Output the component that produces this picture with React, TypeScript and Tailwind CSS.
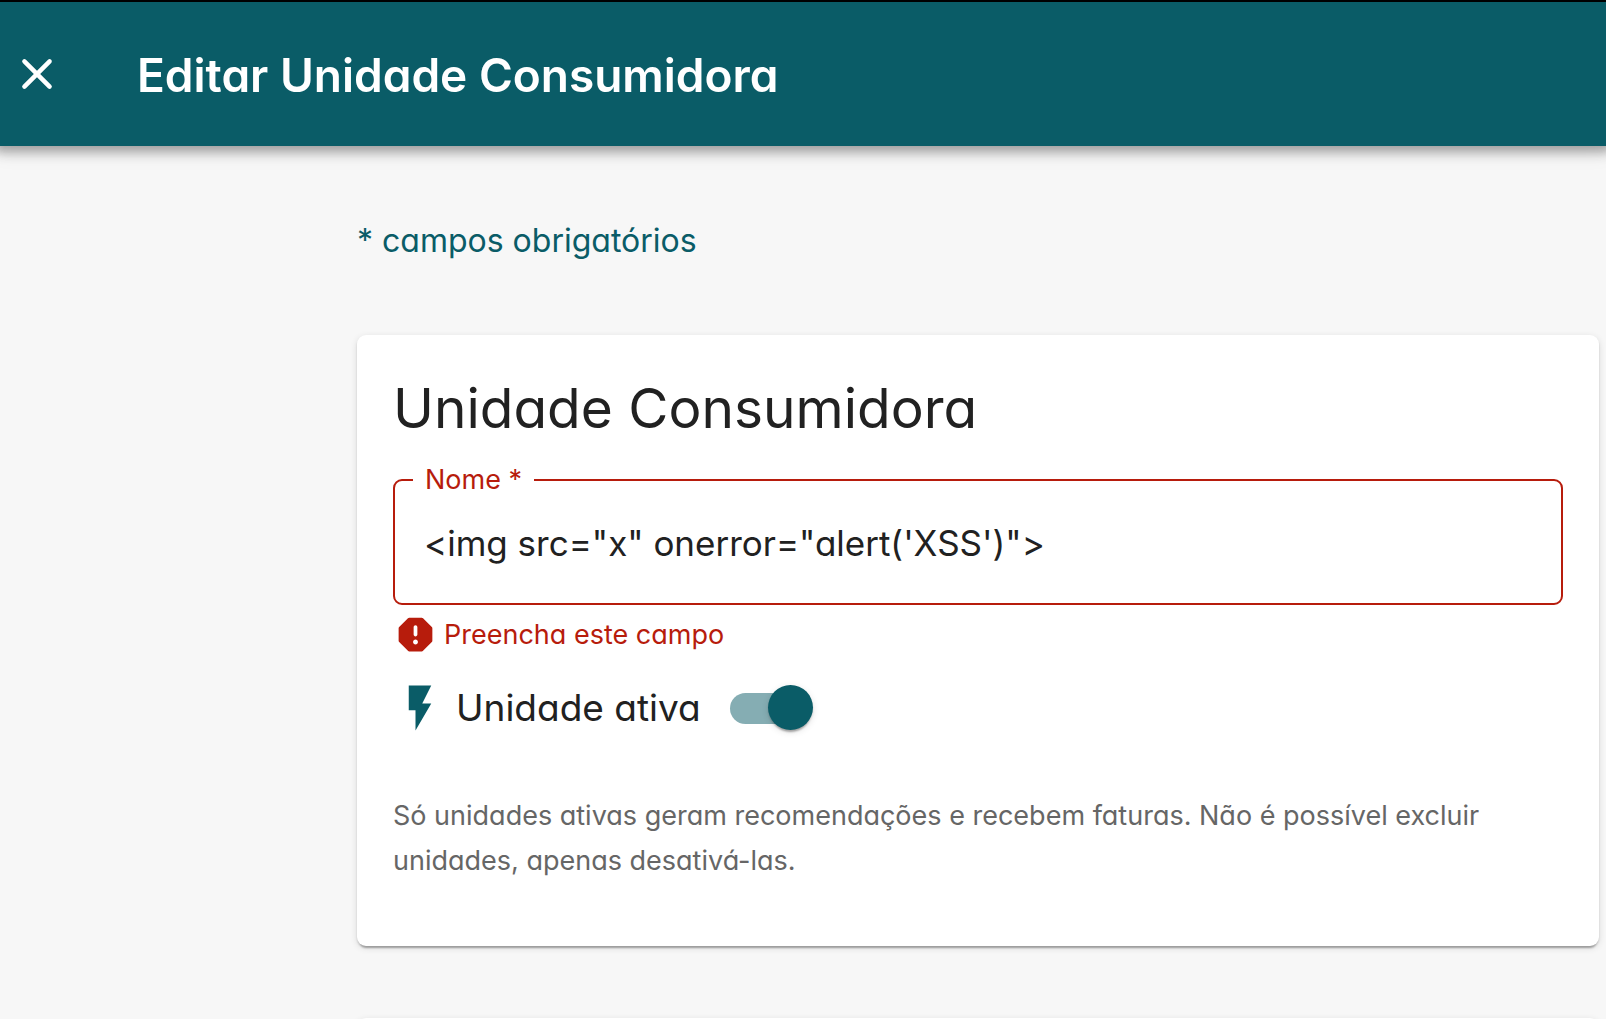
import { useState } from "react";

const shadowCard =
  "shadow-[0_5px_2px_-3px_rgba(0,0,0,0.2),0_2px_2px_0_rgba(0,0,0,0.14),0_2px_7px_0_rgba(0,0,0,0.12)]";

function CloseIcon() {
  return (
    <svg viewBox="0 0 24 24" className="size-[54px]" fill="currentColor" aria-hidden="true">
      <path d="M18.3 5.71a.996.996 0 0 0-1.41 0L12 10.59 7.11 5.7A.996.996 0 1 0 5.7 7.11L10.59 12 5.7 16.89a.996.996 0 1 0 1.41 1.41L12 13.41l4.89 4.89a.996.996 0 1 0 1.41-1.41L13.41 12l4.89-4.89c.38-.38.38-1.02 0-1.4z" />
    </svg>
  );
}

function ReportIcon() {
  return (
    <svg viewBox="0 0 24 24" className="size-[45px] shrink-0" fill="currentColor" aria-hidden="true">
      <path
        fillRule="evenodd"
        d="M15.32 3H8.68c-.26 0-.52.11-.7.29L3.29 7.98c-.18.18-.29.44-.29.7v6.63c0 .27.11.52.29.71l4.68 4.68c.19.19.45.3.71.3h6.63c.27 0 .52-.11.71-.29l4.68-4.68c.19-.19.29-.44.29-.71V8.68c0-.27-.11-.52-.29-.71l-4.68-4.68c-.18-.18-.44-.29-.7-.29zM12 17.3c-.72 0-1.3-.58-1.3-1.3s.58-1.3 1.3-1.3 1.3.58 1.3 1.3-.58 1.3-1.3 1.3zm0-4.3c-.55 0-1-.45-1-1V8c0-.55.45-1 1-1s1 .45 1 1v4c0 .55-.45 1-1 1z"
      />
    </svg>
  );
}

function BoltIcon() {
  return (
    <svg viewBox="0 0 24 24" className="size-[54px] text-[#0a5c67]" fill="currentColor" aria-hidden="true">
      <path d="M7 2v11h3v9l7-12h-4l4-8z" />
    </svg>
  );
}

export default function App() {
  const [name, setName] = useState(`<img src="x" onerror="alert('XSS')">`);
  const [active, setActive] = useState(true);

  return (
    <div className="h-screen overflow-x-hidden overflow-y-auto bg-[#f7f7f7] font-['Inter',sans-serif] text-[#212121] [font-feature-settings:'cv11'] [scrollbar-width:none]">
      <header className="sticky top-0 z-10 flex items-center gap-[73px] border-t-2 border-black bg-[#0a5c67] py-[45px] pl-[10px] text-white shadow-[0_-1px_9px_5px_rgba(0,0,0,0.2),0_4px_11px_5px_rgba(0,0,0,0.14),0_-2px_22px_5px_rgba(0,0,0,0.12)]">
        <button type="button" aria-label="Fechar">
          <CloseIcon />
        </button>
        <h1 className="pt-[2px] text-[46px] leading-[52px] font-semibold">Editar Unidade Consumidora</h1>
      </header>

      <main className="flex flex-col pr-[7px] pl-[357px]">
        <p className="pt-[68px] text-[32px] leading-[54px] text-[#0a5c67]">* campos obrigatórios</p>

        <section className={`mt-[67px] rounded-[9px] bg-white px-9 pt-9 pb-[63px] ${shadowCard}`}>
          <h2 className="text-[55px] leading-[74px]">Unidade Consumidora</h2>
          <fieldset className="mt-[19px] h-[141px] rounded-[9px] border-2 border-[#b71c0c]">
            <legend className="ml-[18px] px-3 text-[27px] leading-8 text-[#b71c0c]">
              <label htmlFor="nome">Nome *</label>
            </legend>
            <input
              id="nome"
              type="text"
              required
              aria-invalid="true"
              aria-describedby="nome-erro"
              value={name}
              onChange={(e) => setName(e.target.value)}
              className="mt-[22px] block w-full bg-transparent px-[29px] text-[35px] leading-[50px] outline-none"
            />
          </fieldset>
          <p id="nome-erro" className="mt-[7px] flex items-center gap-[6px] text-[27px] leading-[45px] text-[#b71c0c]">
            <ReportIcon />
            Preencha este campo
          </p>
          <div className="mt-6 flex items-center">
            <BoltIcon />
            <label htmlFor="ativa" className="ml-[9px] text-[37px] leading-[54px]">
              Unidade ativa
            </label>
            <span className="relative ml-[29px] flex h-[46px] w-[83px] items-center">
              <input
                id="ativa"
                type="checkbox"
                role="switch"
                checked={active}
                onChange={(e) => setActive(e.target.checked)}
                className="peer h-[31px] w-[76px] appearance-none rounded-full bg-black/40 checked:bg-[#85adb3]"
              />
              <span className="pointer-events-none absolute top-0 left-0 size-[45px] rounded-full bg-white shadow-[0_5px_2px_-3px_rgba(0,0,0,0.2),0_2px_2px_0_rgba(0,0,0,0.14),0_2px_7px_0_rgba(0,0,0,0.12)] peer-checked:right-0 peer-checked:left-auto peer-checked:bg-[#0a5c67]" />
            </span>
          </div>
          <p className="mt-[58px] text-[27px] leading-[45px] text-[#666666]">
            Só unidades ativas geram recomendações e recebem faturas. Não é possível excluir unidades, apenas
            desativá-las.
          </p>
        </section>

        <section className={`mt-[72px] min-h-24 rounded-[9px] bg-white ${shadowCard}`} />
      </main>
    </div>
  );
}
